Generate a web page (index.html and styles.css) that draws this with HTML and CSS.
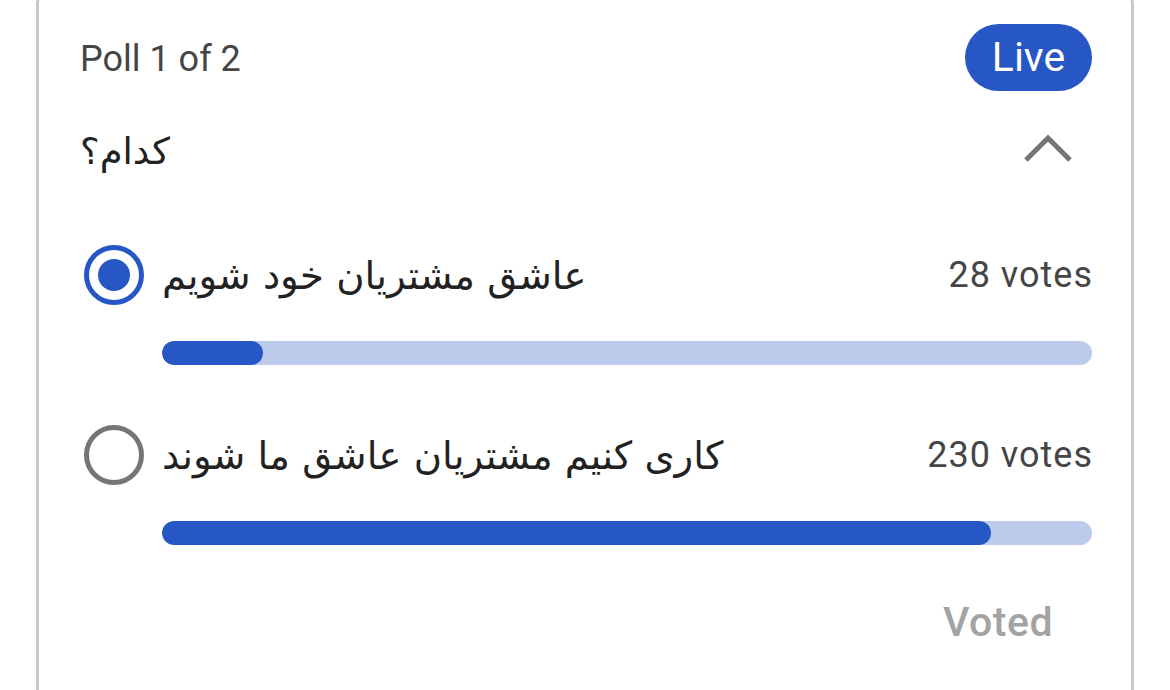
FILE: index.html
```html
<!DOCTYPE html>
<html lang="en">
<head>
<meta charset="utf-8">
<title>Poll</title>
<link rel="stylesheet" href="styles.css">
</head>
<body>
<div class="card">
  <div class="header">
    <span class="poll-count">Poll 1 of 2</span>
    <span class="live">Live</span>
  </div>
  <div class="question-row">
    <span class="question" dir="rtl">كدام؟</span>
    <svg class="chevron" width="50" height="32" viewBox="0 0 50 32"><polyline points="3,29 25,7 47,29" fill="none" stroke="#757575" stroke-width="5"/></svg>
  </div>
  <div class="option">
    <span class="radio checked"><span class="dot"></span></span>
    <span class="label" dir="rtl">عاشق مشتریان خود شویم</span>
    <span class="votes">28 votes</span>
  </div>
  <div class="bar"><div class="fill" style="width:10.85%"></div></div>
  <div class="option second">
    <span class="radio"></span>
    <span class="label" dir="rtl">کاری کنیم مشتریان عاشق ما شوند</span>
    <span class="votes">230 votes</span>
  </div>
  <div class="bar"><div class="fill" style="width:89.15%"></div></div>
  <div class="footer">
    <span class="voted">Voted</span>
  </div>
</div>
</body>
</html>
```
FILE: styles.css
```css
html, body {
  margin: 0;
  padding: 0;
  background: #ffffff;
  overflow: hidden;
}
body {
  font-family: Roboto, "Liberation Sans", sans-serif;
  width: 1170px;
  height: 690px;
}
.card {
  margin-top: -14px;
  margin-left: 36px;
  width: 1098px;
  box-sizing: border-box;
  border: 3px solid #c9c9c9;
  border-radius: 18px;
  padding: 35px 39px 60px 41px;
}
.header {
  display: flex;
  align-items: center;
  justify-content: space-between;
  height: 67px;
}
.poll-count {
  font-size: 36px;
  color: #454545;
  margin-top: 2px;
}
.live {
  display: flex;
  align-items: center;
  justify-content: center;
  width: 127px;
  height: 67px;
  border-radius: 34px;
  background: #2756c5;
  color: #ffffff;
  font-size: 41px;
  padding-bottom: 2px;
  box-sizing: border-box;
}
.question-row {
  margin-top: 24px;
  height: 72px;
  display: flex;
  align-items: center;
  justify-content: space-between;
}
.question {
  font-family: "DejaVu Sans", sans-serif;
  font-size: 37px;
  color: #222222;
}
.chevron {
  margin-right: 19px;
  margin-top: -8px;
}
.option {
  margin-top: 58px;
  height: 60px;
  display: flex;
  align-items: center;
  padding-left: 4px;
}
.option.second {
  margin-top: 60px;
}
.radio {
  width: 60px;
  height: 60px;
  box-sizing: border-box;
  border-radius: 50%;
  border: 5px solid #757575;
  display: flex;
  align-items: center;
  justify-content: center;
  flex-shrink: 0;
}
.radio.checked {
  border-color: #2756c5;
}
.dot {
  width: 32px;
  height: 32px;
  border-radius: 50%;
  background: #2756c5;
}
.label {
  margin-left: 18px;
  font-family: "DejaVu Sans", sans-serif;
  font-size: 38.6px;
  color: #222222;
  flex: 1;
  display: flex;
  justify-content: flex-end;
}
.votes {
  font-size: 36px;
  letter-spacing: 1px;
  margin-right: -1px;
  color: #454545;
  white-space: nowrap;
}
.bar {
  margin-top: 36px;
  margin-left: 82px;
  height: 24px;
  border-radius: 12px;
  background: #bccbec;
  overflow: hidden;
}
.fill {
  height: 100%;
  border-radius: 12px;
  background: #2756c5;
}
.footer {
  margin-top: 52px;
  height: 50px;
  display: flex;
  justify-content: flex-end;
  align-items: center;
  padding-right: 39px;
}
.voted {
  font-size: 41px;
  font-weight: 500;
  letter-spacing: 0.5px;
  color: #a3a3a3;
}
```
